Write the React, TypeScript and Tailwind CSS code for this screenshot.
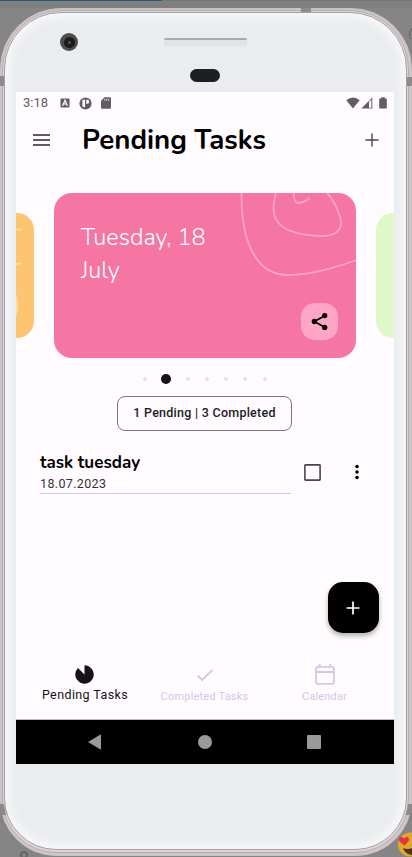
import React from "react";

const nunito = "font-['Nunito','Lato','Open_Sans',sans-serif]";

function StatusBar() {
  return (
    <div className="flex h-[22px] items-center justify-between pl-[7px] pr-[7px] text-[#615d62]">
      <div className="flex items-center">
        <span className="w-[37px] text-[13px] leading-[22px]">3:18</span>
        <svg width="10" height="10" viewBox="0 0 10 10" className="block">
          <rect x="0.5" y="0.5" width="9" height="9" rx="1" fill="currentColor" />
          <path d="M2.6 7.8 5 2.2 7.4 7.8M3.5 6H6.5" fill="none" stroke="#fffbff" strokeWidth="1.2" />
        </svg>
        <svg width="13" height="13" viewBox="0 0 13 13" className="ml-[9px] block">
          <circle cx="6.5" cy="6.5" r="6.1" fill="currentColor" />
          <path d="M3.4 2.7H6V10.3A4.6 4.6 0 0 1 3.4 9.3Z" fill="#fffbff" />
          <path d="M7.2 2.7H8.3A2 2 0 0 1 8.3 6.7H7.2Z" fill="#fffbff" />
        </svg>
        <svg width="10" height="12" viewBox="0 0 10 12" className="ml-[9px] block">
          <path d="M3.4 0.3H9a1 1 0 0 1 1 1V10.7a1 1 0 0 1-1 1H1a1 1 0 0 1-1-1V3.9Z" fill="currentColor" />
          <path d="M3.8 1.8V3.7M5.7 1.8V3.7M7.6 1.8V3.7" stroke="#fffbff" strokeWidth="0.8" />
        </svg>
      </div>
      <div className="flex items-center">
        <svg width="14" height="12" viewBox="0 0 14 12" className="block">
          <path d="M0.3 3.2Q7-2 13.7 3.2L7 11.5Z" fill="currentColor" />
        </svg>
        <svg width="12" height="12" viewBox="0 0 12 12" className="ml-[1px] block">
          <path d="M0.3 11.5 11.3 0.5V11.5Z" fill="currentColor" />
          <path d="M8 4.8 10.3 2.6V10.7H8Z" fill="#fffbff" />
        </svg>
        <svg width="8" height="12" viewBox="0 0 8 12" className="ml-[6px] block">
          <path d="M2.2 0.3H5.8V1.4H7.2a.6.6 0 0 1 .6.6V11a.6.6 0 0 1-.6.6H.8A.6.6 0 0 1 .2 11V2a.6.6 0 0 1 .6-.6H2.2Z" fill="currentColor" />
        </svg>
      </div>
    </div>
  );
}

function Header() {
  return (
    <header className="flex h-[50px] items-center pl-[17px] pr-[15px]">
      <svg width="17" height="12" viewBox="0 0 17 12" className="mt-px block">
        <path d="M0 1H17M0 6H17M0 11H17" stroke="#2b272d" strokeWidth="1.5" />
      </svg>
      <h1 className={`${nunito} ml-[32px] mt-px grow whitespace-nowrap text-[27.6px] font-bold leading-[36px] text-black`}>
        Pending Tasks
      </h1>
      <svg width="14" height="14" viewBox="0 0 14 14" className="mr-[0.5px] mt-px block">
        <path d="M7 0.5V13.5M0.5 7H13.5" stroke="#49454f" strokeWidth="1.4" />
      </svg>
    </header>
  );
}

function Carousel() {
  return (
    <div className="mt-[29px] flex h-[165px] items-center">
      <div className="h-[125px] w-[18px] overflow-hidden rounded-r-[17px] bg-[#fdc571]">
        <svg width="18" height="125" viewBox="0 0 18 125" className="block">
          <path d="M0 17Q3 16 6 17M0 51Q3 51 5.5 50" fill="none" stroke="#fedda3" strokeWidth="1.8" />
          <path d="M0 82Q2 84 2 93T0 103Z" fill="#fedda3" />
        </svg>
      </div>
      <div className="relative ml-[19.6px] flex h-[165px] w-[302.4px] overflow-hidden rounded-[18px] bg-[#f576a2] pl-[27.4px] pt-[28px]">
        <svg width="303" height="166" viewBox="0 0 303 166" className="absolute inset-0">
          <g fill="none" stroke="#ffa3c5" strokeWidth="1.8">
            <path d="M187.5 0C187 43 199 82 234 82C258 82 282 74 303 67" />
            <path d="M222 0C215 23 220 42 268 43C286 43 290 33 285 21C282 12 278 5 273 0" />
            <path d="M239.5 0C240 7 241 10 244 10C248 10 252 8 256 5" />
          </g>
        </svg>
        <p className={`${nunito} relative w-[150px] text-[23.5px] font-light leading-[33px] text-white`}>
          Tuesday, 18
          <br />
          July
        </p>
        <button className="absolute bottom-[18px] right-[18px] flex h-[37px] w-[37px] items-center justify-center rounded-[14px] bg-[#ffa5c6]" aria-label="Share">
          <svg width="17" height="19" viewBox="0 0 18 20" className="block">
            <path d="M15 3.6 3.5 10 15 16.4" fill="none" stroke="#000" strokeWidth="1.8" />
            <circle cx="14.5" cy="3.7" r="2.8" />
            <circle cx="3.5" cy="10" r="2.8" />
            <circle cx="14.5" cy="16.3" r="2.8" />
          </svg>
        </button>
      </div>
      <div className="ml-auto h-[125px] w-[18px] rounded-l-[17px] bg-[#def8ca]" />
    </div>
  );
}

function Pager() {
  return (
    <div className="mt-[16px] flex h-[10px] items-center pl-[126.5px]">
      <i className="size-[4px] rounded-full bg-[#e1e1f4]" />
      <i className="mx-[14.8px] size-[9.5px] rounded-full bg-[#141316]" />
      <div className="flex gap-[15.3px]">
        {[0, 1, 2, 3, 4].map((n) => (
          <i key={n} className="size-[4px] rounded-full bg-[#e1e1f4]" />
        ))}
      </div>
    </div>
  );
}

function TaskRow() {
  return (
    <div className="mt-[22px] flex h-[41px] pl-[24px]">
      <div className="w-[251px] border-b border-[#cfcaea]">
        <p className={`${nunito} h-[22px] text-[17px] font-bold leading-[20px] text-black`}>task tuesday</p>
        <p className="text-[12.5px] leading-[18px] tracking-[0.35px] text-[#343136]">18.07.2023</p>
      </div>
      <svg width="17" height="17" viewBox="0 0 17 17" className="ml-[13px] mt-[11px] block">
        <rect x="0.9" y="0.9" width="15.2" height="15.2" rx="0.6" fill="none" stroke="#49454f" strokeWidth="1.6" />
      </svg>
      <svg width="4" height="16" viewBox="0 0 4 16" className="ml-[34px] mt-[11px] block">
        <circle cx="2" cy="2.5" r="1.8" />
        <circle cx="2" cy="8" r="1.8" />
        <circle cx="2" cy="13.5" r="1.8" />
      </svg>
    </div>
  );
}

function BottomTabs() {
  return (
    <nav className="flex h-[64px] text-center text-[#cfc9e4]">
      <div className="flex w-[138px] flex-col items-center pt-[10px] text-[#151317]">
        <svg width="19" height="19" viewBox="0 0 19 19" className="mr-px block">
          <path d="M9.5 0.3A9.2 9.2 0 1 1 3 3L9.5 9.5Z" fill="currentColor" />
        </svg>
        <span className="mt-[2px] whitespace-nowrap text-[12.5px] leading-[18px] tracking-[0.4px]">Pending Tasks</span>
      </div>
      <div className="flex w-[101px] flex-col items-center pt-[11px]">
        <svg width="18" height="18" viewBox="0 0 18 18" className="block">
          <path d="M1.5 9.5 6.2 14 16.5 3.8" fill="none" stroke="currentColor" strokeWidth="1.8" />
        </svg>
        <span className="mt-[4px] whitespace-nowrap text-[11px] leading-[18px] tracking-[0.2px]">Completed Tasks</span>
      </div>
      <div className="flex w-[139px] flex-col items-center pt-[9px]">
        <svg width="20" height="21" viewBox="0 0 20 21" className="block">
          <path d="M2.5 2.8H17.5a1.4 1.4 0 0 1 1.4 1.4V18a1.8 1.8 0 0 1-1.8 1.8H2.9A1.8 1.8 0 0 1 1.1 18V4.2a1.4 1.4 0 0 1 1.4-1.4ZM1 8H19M4.8 0V3M15.2 0V3" fill="none" stroke="currentColor" strokeWidth="1.8" />
        </svg>
        <span className="mt-[3px] text-[11px] leading-[18px] tracking-[0.15px]">Calendar</span>
      </div>
    </nav>
  );
}

function SystemNav() {
  return (
    <div className="flex h-[44px] items-center bg-black pl-[72px] pr-[73px]">
      <svg width="13" height="16" viewBox="0 0 13 16" className="block"><path d="M13 0.3V15.7L0 8Z" fill="#9a9a9a" /></svg>
      <i className="ml-[97px] size-[13.5px] rounded-full bg-[#9a9a9a]" />
      <i className="ml-auto size-[14px] rounded-[1px] bg-[#9a9a9a]" />
    </div>
  );
}

function Screen() {
  return (
    <main className="flex h-[672px] w-[378px] flex-col bg-[#fffbff] font-['Roboto',sans-serif]">
      <StatusBar />
      <Header />
      <Carousel />
      <Pager />
      <div className="ml-[101px] mt-[12px] flex h-[35px] w-[175px] shrink-0 items-center justify-center rounded-[8px] border border-[#7d757c] text-[12.5px] font-medium tracking-[0.26px] text-[#1c1b1f]">
        1 Pending | 3 Completed
      </div>
      <TaskRow />
      <button className="ml-auto mr-[15px] mt-auto mb-[22px] flex size-[51px] items-center justify-center rounded-[15px] bg-black shadow-[0_3px_5px_rgba(0,0,0,0.3)]" aria-label="Add">
        <svg width="14" height="14" viewBox="0 0 14 14" className="mr-px block"><path d="M7 0.5V13.5M0.5 7H13.5" stroke="#fff" strokeWidth="1.7" /></svg>
      </button>
      <BottomTabs />
      <div className="h-px bg-[#bcb9bc]" />
      <SystemNav />
    </main>
  );
}

export default function App() {
  return (
    <div className="relative h-[857px] w-[412px] overflow-hidden bg-[#858585]">
      <div className="flex h-[8px] items-start bg-[#7f7f80]">
        <div className="h-px w-[162px] bg-[#22587f]" />
        <div className="h-px grow bg-[#747679]" />
      </div>
      <div className="h-[848px] rounded-t-[61px] rounded-b-[56px] border border-[#c9c1c4] bg-[#cfc6c9] pt-px pr-[2px] pb-[2px] pl-px">
        <div className="h-full rounded-t-[59px] rounded-b-[54px] border border-[#b5acb0] bg-[#ddd5d8] p-px pb-[2px]">
          <div className="h-full rounded-t-[57px] rounded-b-[52px] border border-[#a3a0a3] bg-[#eaecee] shadow-[inset_0_0_9px_5px_#f7f8fa]">
            <div className="flex h-[79px] flex-col">
              <div className="flex h-[56px] pl-[55px] pt-[20px]">
                <div className="flex size-[18px] items-center justify-center rounded-full bg-[#4b4d50]">
                  <div className="flex size-[11px] items-center justify-center rounded-full bg-[#191b1d]">
                    <i className="size-[3px] rounded-full bg-[#5e5a30]" />
                  </div>
                </div>
                <div className="ml-[86px] mt-[5px] h-[8px] w-[83px] rounded-[2px] border-t-2 border-[#a3acb5] bg-[#dfe3e7]" />
              </div>
              <div className="ml-[185px] h-[13px] w-[30px] rounded-full bg-[#1e1f22]" />
            </div>
            <div className="pl-[11px]">
              <Screen />
            </div>
          </div>
        </div>
      </div>
      <i className="absolute left-0 top-[76px] h-[10px] w-[4px] bg-[#8f878a]" />
      <i className="absolute right-0 top-[77px] h-[9px] w-[5px] bg-[#8f878a]" />
      <i className="absolute left-[301px] top-[8px] h-[4px] w-[10px] bg-[#918a8d]" />
      <i className="absolute left-0 top-[804px] h-[11px] w-[5px] skew-x-12 bg-[#8f878a]" />
      <i className="absolute right-0 top-[804px] h-[11px] w-[5px] -skew-x-12 bg-[#8f878a]" />
      <i className="absolute left-[409px] top-[26px] size-[16px] rounded-full border border-[#5d5d5d]" />
      <i className="absolute left-[20px] top-[851px] size-[8px] rounded-full border-2 border-[#666]" />
      <svg width="15" height="25" viewBox="0 0 15 25" className="absolute left-[397px] top-[832px]">
        <circle cx="13" cy="12.5" r="12" fill="#dfa829" />
        <path d="M7.5 13.5 3 10C0 5 4.5 3.5 7.5 6.5C9 3.5 13.5 5 11.5 9.5Z" fill="#e92f44" />
        <path d="M6 16Q11 18 15 16V23Q8 22 6 16Z" fill="#55301a" />
      </svg>
    </div>
  );
}
